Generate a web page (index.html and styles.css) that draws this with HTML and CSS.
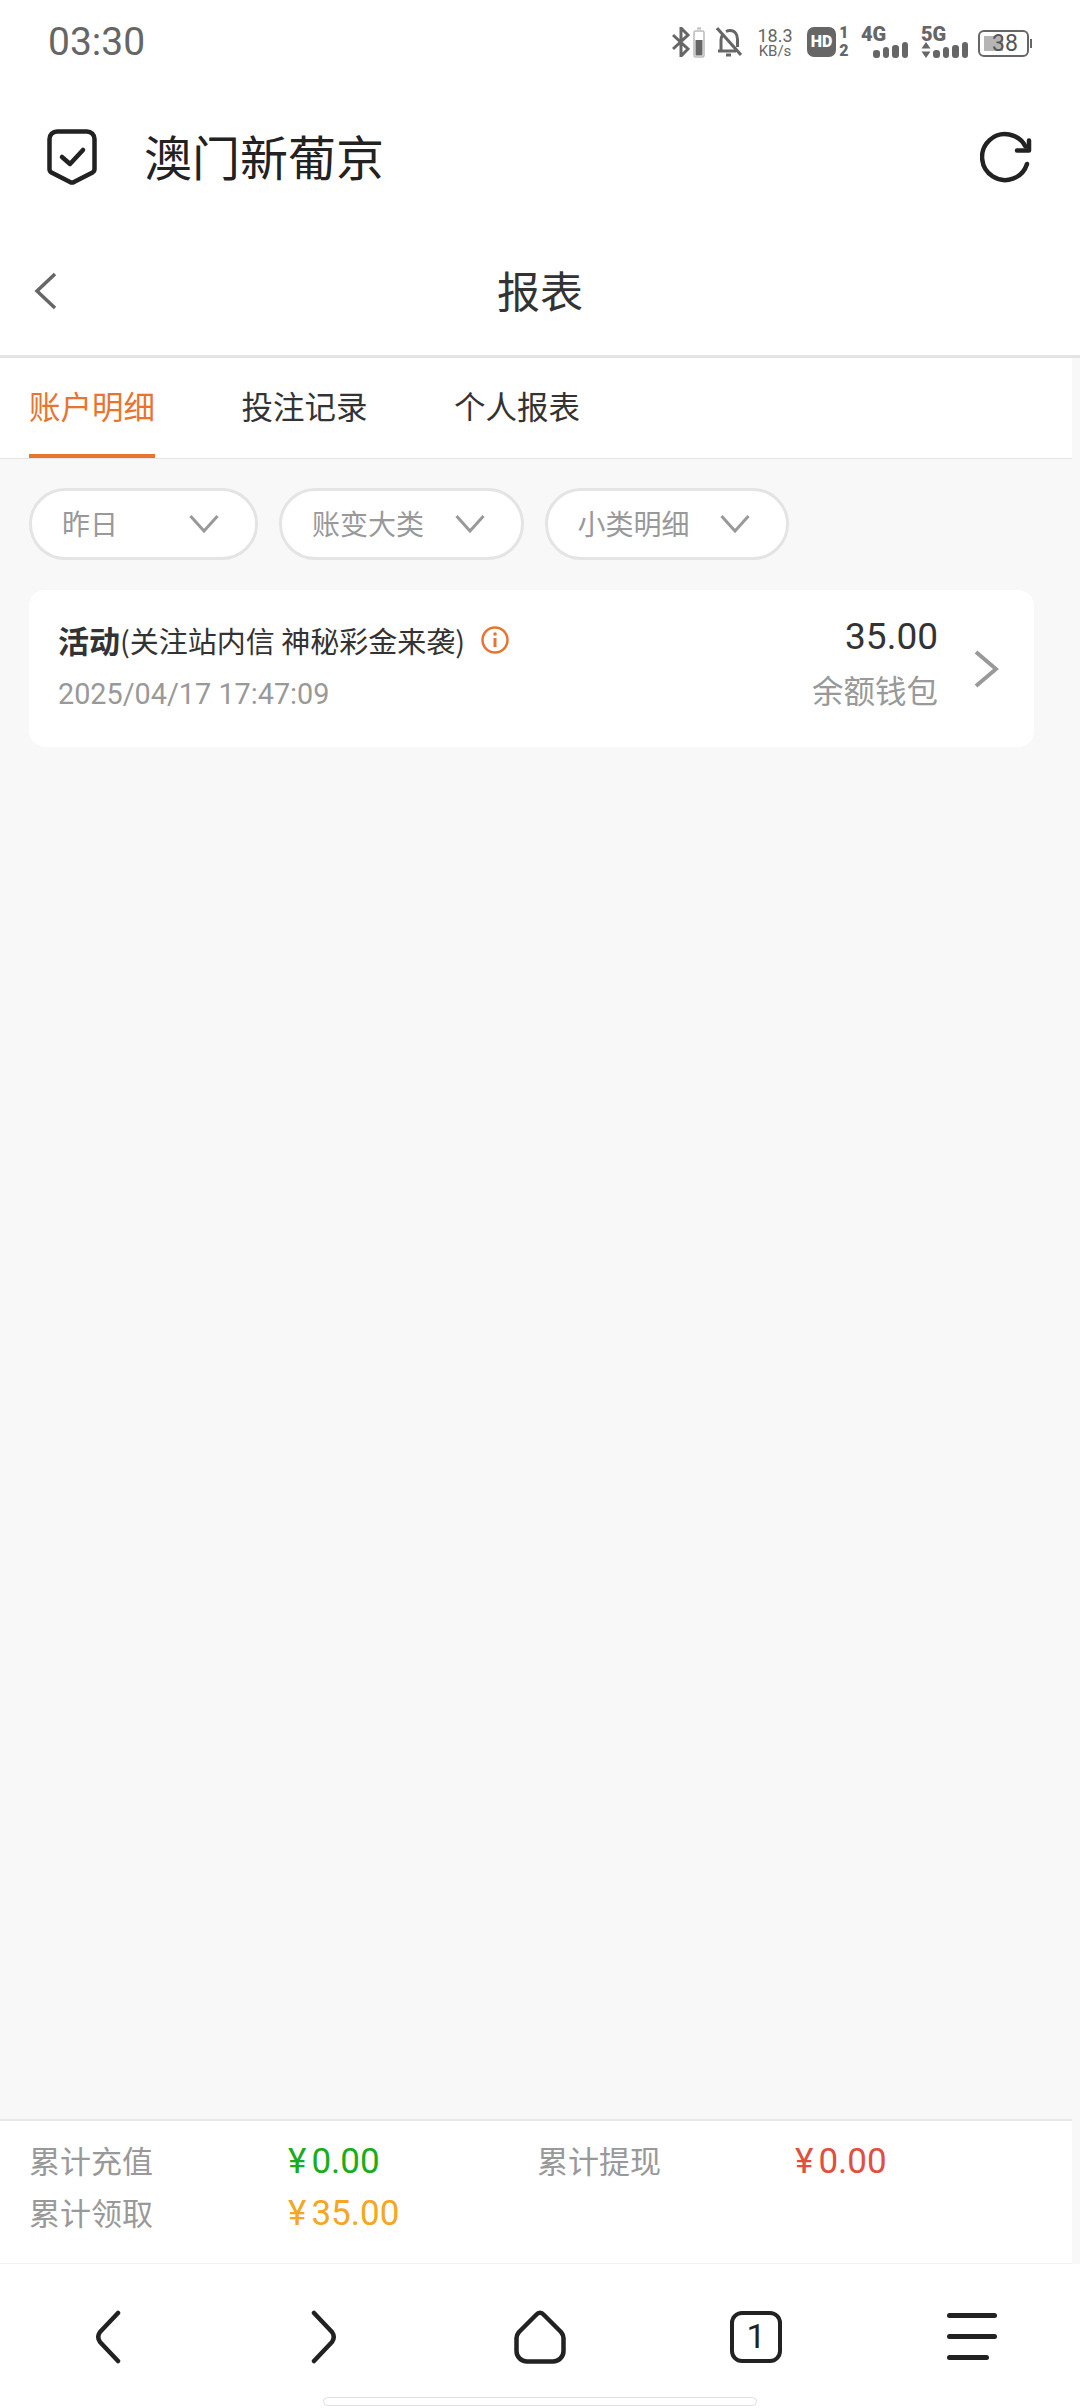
FILE: index.html
```html
<!DOCTYPE html>
<html lang="zh-CN">
<head>
  <meta charset="UTF-8" />
  <meta name="viewport" content="width=device-width, initial-scale=1.0" />
  <title>报表</title>
  <link rel="stylesheet" href="styles.css">
</head>
<body>
  <div class="phone">
    <div class="status-bar">
      <span class="clock">03:30</span>
      <div class="status-icons">
        <svg class="ic-bt" width="18" height="30" viewBox="0 0 18 30"><path d="M1 8l15 14-7 7V1l7 7L1 22" fill="none" stroke="#666" stroke-width="3"/></svg>
        <svg class="ic-cell" width="12" height="31" viewBox="0 0 12 31"><rect x="1" y="4" width="10" height="26" rx="1.5" fill="none" stroke="#bbb" stroke-width="1.5"/><rect x="4" y="0.5" width="4" height="2" fill="#bbb"/><rect x="2.5" y="13" width="7" height="15.5" fill="#666"/></svg>
        <svg class="ic-bell" width="26" height="30" viewBox="0 0 26 30"><path d="M5 23V13c0-2 .5-3.500 1.500-5M10 4.500C11 4 12 3.500 14 3.500c5 0 7.500 4 7.500 9V20M2 24h18M10 28h5" fill="none" stroke="#666" stroke-width="3"/><path d="M1 1l24 27" stroke="#666" stroke-width="3"/></svg>
        <div class="speed"><span>18.3</span><span class="speed-unit">KB/s</span></div>
        <span class="hd">HD</span>
        <div class="sim-nums"><span>1</span><span>2</span></div>
        <div class="net net-4g">
          <span class="net-name">4G</span>
          <div class="bars"><i class="b1"></i><i class="b2"></i><i class="b3"></i><i class="b4"></i></div>
        </div>
        <div class="net net-5g">
          <span class="net-name">5G</span>
          <div class="net-row">
            <svg width="10" height="16" viewBox="0 0 10 16"><path d="M5 0l4.500 6.500h-9zM5 16l4.500-6.500h-9z" fill="#666"/></svg>
            <div class="bars"><i class="b1"></i><i class="b2"></i><i class="b3"></i><i class="b4"></i></div>
          </div>
        </div>
        <div class="battery"><div class="battery-fill"></div><span class="battery-num">38</span></div>
      </div>
    </div>

    <div class="app-header">
      <div class="app-brand">
        <svg width="50" height="56" viewBox="0 0 50 56"><path d="M10 2.500h30a7.500 7.500 0 0 1 7.500 7.500v30a4 4 0 0 1-2 3.500L27 53a4 4 0 0 1-4 0L4.500 43.500a4 4 0 0 1-2-3.500V10A7.500 7.500 0 0 1 10 2.500z" fill="none" stroke="#222" stroke-width="4.500"/><path d="M15 28l8 7 13-14" fill="none" stroke="#222" stroke-width="4.500" stroke-linecap="round" stroke-linejoin="round"/></svg>
        <span class="app-name">澳门新葡京</span>
      </div>
      <svg width="52" height="52" viewBox="0 0 52 52"><path d="M47 33A23 23 0 1 1 45.500 15.500" fill="none" stroke="#222" stroke-width="4.500" stroke-linecap="round"/><path d="M49 9.500V19.500H37" fill="none" stroke="#222" stroke-width="4.500" stroke-linecap="round" stroke-linejoin="round"/></svg>
    </div>

    <div class="page-title-bar">
      <svg class="back" width="24" height="38" viewBox="0 0 24 38"><path d="M21 2L3 19l18 17" fill="none" stroke="#666" stroke-width="3.500"/></svg>
      <h1>报表</h1>
    </div>

    <div class="content">
      <div class="tabs">
        <div class="tab active">账户明细</div>
        <div class="tab">投注记录</div>
        <div class="tab">个人报表</div>
      </div>

      <div class="main">
        <div class="filters">
          <div class="pill pill-day"><span>昨日</span><svg width="30" height="20" viewBox="0 0 30 20"><path d="M1.500 2L15 17 28.500 2" fill="none" stroke="#999" stroke-width="3"/></svg></div>
          <div class="pill"><span>账变大类</span><svg width="30" height="20" viewBox="0 0 30 20"><path d="M1.500 2L15 17 28.500 2" fill="none" stroke="#999" stroke-width="3"/></svg></div>
          <div class="pill"><span>小类明细</span><svg width="30" height="20" viewBox="0 0 30 20"><path d="M1.500 2L15 17 28.500 2" fill="none" stroke="#999" stroke-width="3"/></svg></div>
        </div>

        <div class="record">
          <div class="record-left">
            <div class="record-title">
              <b>活动</b><span>(关注站内信 神秘彩金来袭)</span>
              <svg width="30" height="30" viewBox="0 0 30 30"><circle cx="15" cy="15" r="12.500" fill="none" stroke="#e8752f" stroke-width="2.500"/><circle cx="15" cy="9" r="1.800" fill="#e8752f"/><path d="M15 13v9" stroke="#e8752f" stroke-width="3"/></svg>
            </div>
            <div class="record-date">2025/04/17 17:47:09</div>
          </div>
          <div class="record-right">
            <div class="record-amount">35.00</div>
            <div class="record-wallet">余额钱包</div>
          </div>
          <svg class="record-arrow" width="26" height="38" viewBox="0 0 26 38"><path d="M3 2l20 17L3 36" fill="none" stroke="#999" stroke-width="4"/></svg>
        </div>
      </div>

      <div class="summary">
        <div class="sum-label">累计充值</div><div class="sum-val green"><span class="yen">¥</span>0.00</div>
        <div class="sum-label">累计提现</div><div class="sum-val red"><span class="yen">¥</span>0.00</div>
        <div class="sum-label">累计领取</div><div class="sum-val orange"><span class="yen">¥</span>35.00</div>
      </div>
    </div>

    <div class="browser-nav">
      <svg width="26" height="54" viewBox="0 0 26 54"><path d="M23 3L5 22Q1.500 27 5 32L23 51" fill="none" stroke="#222" stroke-width="4.500" stroke-linecap="round" stroke-linejoin="round"/></svg>
      <svg width="26" height="54" viewBox="0 0 26 54"><path d="M3 3l18 19q3.500 5 0 10L3 51" fill="none" stroke="#222" stroke-width="4.500" stroke-linecap="round" stroke-linejoin="round"/></svg>
      <svg width="52" height="54" viewBox="0 0 52 54"><path d="M22 5Q26 .5 30 5L47 22Q49.500 25 49.500 28V41A10.500 10.500 0 0 1 39 51.500H13A10.500 10.500 0 0 1 2.500 41V28Q2.500 25 5 22Z" fill="none" stroke="#222" stroke-width="4.500" stroke-linejoin="round"/></svg>
      <div class="tab-count">1</div>
      <div class="menu"><i></i><i></i><i class="short"></i></div>
    </div>
    <div class="home-bar"></div>
  </div>
</body>
</html>
```

FILE: styles.css
```css
* {
  box-sizing: border-box;
  margin: 0;
  padding: 0;
}

body {
  background-color: #fff;
  font-family: "Noto Sans CJK SC", Roboto, sans-serif;
}

.phone {
  width: 1080px;
  height: 2408px;
  display: flex;
  flex-direction: column;
  background-color: #fff;
  overflow: hidden;
}

/* status bar */
.status-bar {
  height: 84px;
  flex: none;
  display: flex;
  justify-content: space-between;
  padding: 27px 51px 0 48px;
}

.clock {
  font-family: Roboto, sans-serif;
  font-size: 39px;
  line-height: 30px;
  color: #666;
}

.status-icons {
  height: 31px;
  display: flex;
  align-items: flex-start;
  color: #666;
}

.ic-bt { margin-right: 3px; }
.ic-cell { margin-right: 11px; }
.ic-bell { margin-right: 15px; }

.speed {
  width: 36px;
  display: flex;
  flex-direction: column;
  align-items: center;
  font-family: Roboto, sans-serif;
  font-size: 18px;
  line-height: 17px;
  margin-right: 14px;
}

.speed-unit {
  font-size: 15px;
  line-height: 14px;
}

.hd {
  width: 29px;
  height: 30px;
  background-color: #666;
  border-radius: 7px;
  color: #fff;
  font-family: Roboto, sans-serif;
  font-size: 16px;
  font-weight: 900;
  line-height: 30px;
  text-align: center;
  margin-right: 3px;
}

.sim-nums {
  width: 10px;
  display: flex;
  flex-direction: column;
  margin-top: -3px;
  font-family: Roboto, sans-serif;
  font-size: 16px;
  font-weight: 900;
  line-height: 18px;
  text-align: center;
  margin-right: 12px;
}

.net {
  display: flex;
  flex-direction: column;
  font-family: Roboto, sans-serif;
  font-weight: 900;
}

.net-4g {
  width: 47px;
  margin-right: 13px;
}

.net-5g {
  width: 47px;
  margin-right: 10px;
}

.net-name {
  font-size: 20px;
  line-height: 15px;
}

.net-row {
  display: flex;
  align-items: flex-end;
  justify-content: space-between;
}

.net-4g .bars {
  align-self: flex-end;
}

.bars {
  display: flex;
  align-items: flex-end;
  gap: 3px;
  height: 16px;
}

.bars i {
  display: block;
  width: 6.500px;
  background-color: #666;
  border-radius: 3px;
}

.b1 { height: 8px; }
.b2 { height: 11px; }
.b3 { height: 13px; }
.b4 { height: 16px; }

.battery {
  width: 51px;
  height: 27px;
  margin-top: 3px;
  border: 2px solid #666;
  border-radius: 6px;
  position: relative;
  padding: 4px;
}

.battery::after {
  content: "";
  position: absolute;
  right: -5px;
  top: 7px;
  width: 2px;
  height: 9px;
  background-color: #666;
}

.battery-fill {
  width: 19px;
  height: 100%;
  background-color: #b5b5b5;
}

.battery-num {
  position: absolute;
  left: 12px;
  top: 0;
  font-family: Roboto, sans-serif;
  font-size: 23px;
  line-height: 23px;
  color: #555;
}

/* app header */
.app-header {
  height: 146px;
  flex: none;
  display: flex;
  align-items: center;
  justify-content: space-between;
  padding: 0 48px 0 47px;
}

.app-brand {
  display: flex;
  align-items: center;
  gap: 47px;
}

.app-name {
  font-size: 48px;
  line-height: 56px;
  margin-top: -5px;
  color: #222;
}

/* page title */
.page-title-bar {
  height: 128px;
  flex: none;
  display: flex;
  align-items: center;
  justify-content: center;
  border-bottom: 3px solid #e4e4e4;
  position: relative;
}

.page-title-bar h1 {
  font-size: 43px;
  font-weight: 400;
  margin-top: -8px;
  color: #333;
}

.back {
  position: absolute;
  left: 34px;
  top: 42px;
}

/* scrolling part, white panels stop 8px short of the right edge */
.content {
  flex: 1;
  display: flex;
  flex-direction: column;
  min-height: 0;
  background-color: #f8f8f8;
}

.tabs {
  height: 101px;
  width: 1072px;
  flex: none;
  display: flex;
  gap: 86.500px;
  padding-left: 29px;
  border-bottom: 1px solid #e4e4e4;
  background-color: #fff;
}

.tab {
  height: 100px;
  width: 126px;
  font-size: 31.500px;
  line-height: 95px;
  color: #333;
  white-space: nowrap;
}

.tab.active {
  color: #e8752f;
  border-bottom: 4px solid #e8752f;
}

.main {
  flex: 1;
  width: 1072px;
  padding: 29px 38px 0 29px;
}

.filters {
  display: flex;
  gap: 21px;
}

.pill {
  width: 244.500px;
  height: 72px;
  background-color: #fff;
  border: 3px solid #e4e4e4;
  border-radius: 36px;
  display: flex;
  align-items: center;
  justify-content: space-between;
  padding: 0 36px 3px 30px;
  font-size: 28px;
  color: #999;
}

.pill svg {
  margin-top: 3px;
}

.pill-day {
  width: 229px;
}

.record {
  height: 157px;
  margin-top: 30px;
  background-color: #fff;
  border-radius: 16px;
  display: flex;
  align-items: center;
  padding: 0 35px 0 29px;
}

.record-left {
  flex: 1;
  padding-bottom: 6px;
}

.record-title {
  display: flex;
  align-items: center;
  font-size: 29px;
  color: #333;
  line-height: 40px;
}

.record-title b {
  font-size: 31px;
}

.record-title svg {
  margin-left: 15px;
}

.record-date {
  margin-top: 16px;
  font-family: Roboto, sans-serif;
  font-size: 28.800px;
  line-height: 36px;
  color: #999;
}

.record-right {
  text-align: right;
  padding-bottom: 14px;
}

.record-amount {
  font-family: Roboto, sans-serif;
  font-size: 37px;
  line-height: 44px;
  color: #333;
}

.record-wallet {
  margin-top: 10px;
  font-size: 31.500px;
  line-height: 40px;
  color: #999;
}

.record-arrow {
  margin-left: 35px;
}

.summary {
  width: 1072px;
  height: 145px;
  flex: none;
  background-color: #fff;
  border-top: 2px solid #e8e8e8;
  border-bottom: 1px solid #f2f2f2;
  padding: 14px 0 0 29px;
  display: grid;
  grid-template-columns: 259px 249px 258px 1fr;
  grid-auto-rows: 52px;
  align-items: center;
  font-size: 31px;
}

.sum-label {
  margin-top: -3px;
  color: #999;
}

.sum-val {
  margin-top: 1px;
  font-family: Roboto, sans-serif;
  font-size: 35px;
}

.yen {
  margin-right: 5px;
}

.green { color: #1aad19; }
.red { color: #e04f3f; }
.orange { color: #f5a623; }

/* browser toolbar */
.browser-nav {
  height: 133px;
  flex: none;
  display: grid;
  grid-template-columns: repeat(5, 1fr);
  align-items: center;
  justify-items: center;
  padding-top: 12px;
}

.tab-count {
  width: 52px;
  height: 52px;
  border: 4.500px solid #222;
  border-radius: 12px;
  font-family: Roboto, sans-serif;
  font-size: 34px;
  line-height: 43px;
  text-align: center;
  color: #222;
}

.menu {
  width: 50px;
  height: 47px;
  display: flex;
  flex-direction: column;
  justify-content: space-between;
}

.menu i {
  display: block;
  height: 5px;
  background-color: #222;
  border-radius: 2.500px;
}

.menu .short {
  width: 42px;
}

.home-bar {
  width: 434px;
  height: 9px;
  margin: 0 auto 2px;
  background-color: #fff;
  border: 1px solid #e0e0e0;
  border-radius: 5px;
  flex: none;
}
```
